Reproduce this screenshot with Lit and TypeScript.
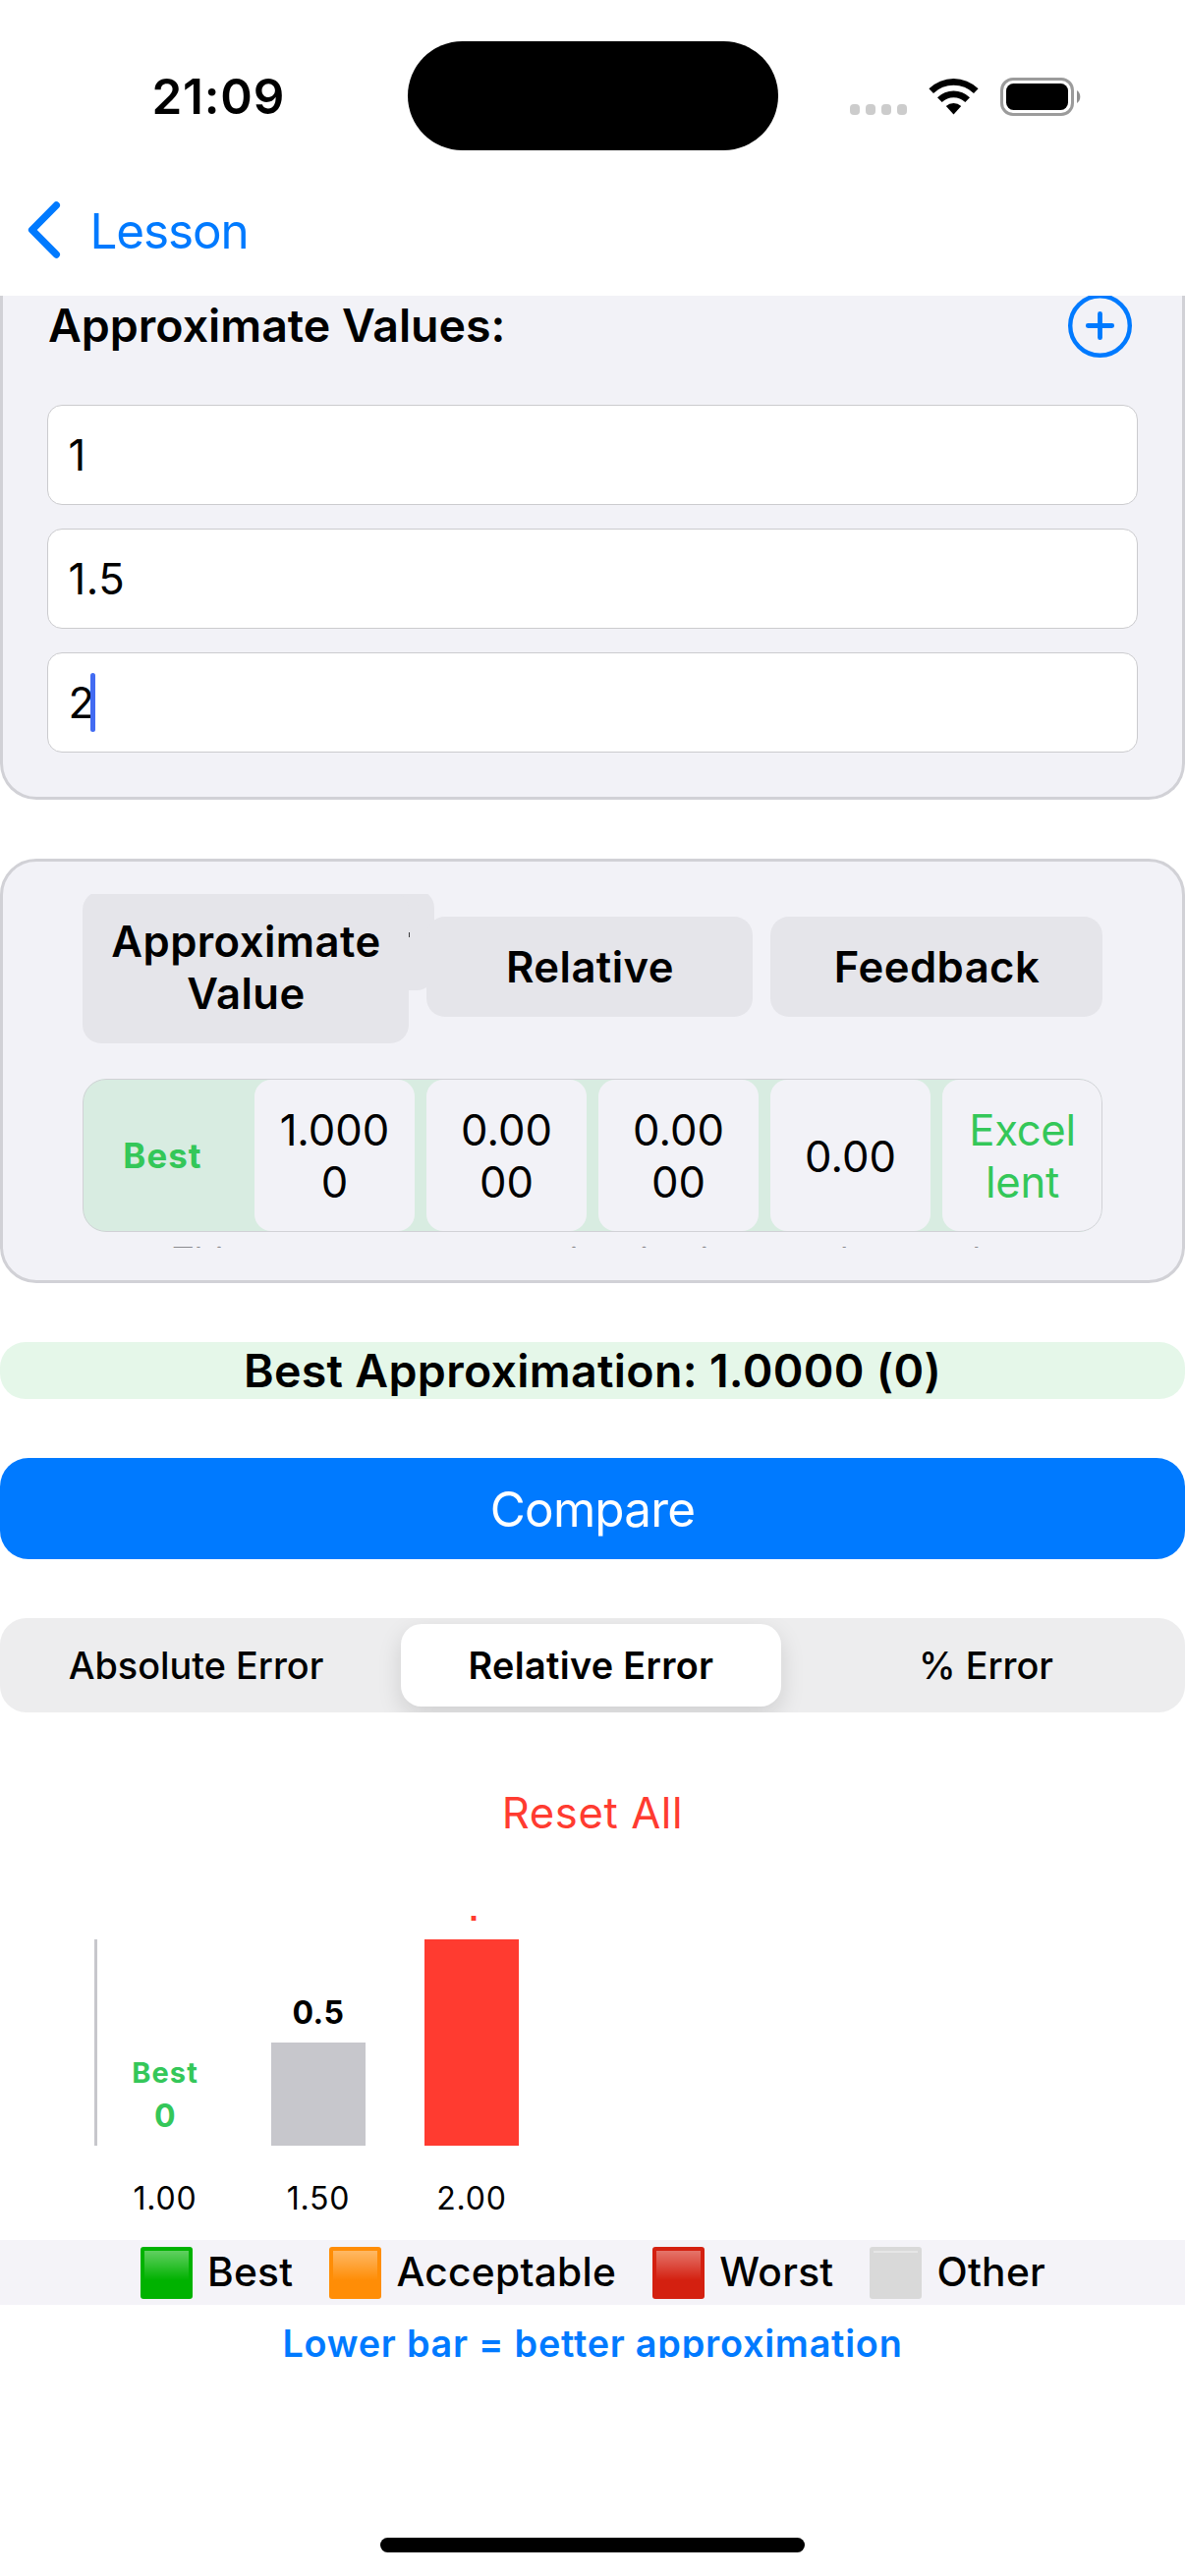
import { LitElement, html, css, nothing } from "lit";
import { customElement, property } from "lit/decorators.js";
import { classMap } from "lit/directives/class-map.js";
import { styleMap } from "lit/directives/style-map.js";

interface Bar {
  label: string;
  value: string;
  height: number;
  kind: "best" | "other" | "worst";
}

@customElement("status-bar")
class StatusBar extends LitElement {
  static styles = css`
    :host {
      display: flex;
      height: 196px;
      align-items: center;
      position: relative;
    }
    .time {
      margin-left: 154.5px;
      width: 139.5px;
      font-size: 49.4px;
      font-weight: 600;
      letter-spacing: 0.8px;
      line-height: 60px;
    }
    .island {
      margin-left: 121px;
      margin-top: -2px;
      width: 376.5px;
      height: 111px;
      border-radius: 56px;
      background: #000;
    }
    .cells {
      display: flex;
      gap: 6px;
      margin: 26px 0 0 73.5px;
    }
    .cells i {
      width: 10px;
      height: 11px;
      border-radius: 4px;
      background: #ccc;
    }
    .wifi {
      margin-left: 22px;
      width: 51px;
      height: 38px;
    }
    .battery {
      margin-left: 22px;
      width: 83px;
      height: 39px;
    }
  `;
  render() {
    return html`
      <span class="time">21:09</span>
      <div class="island"></div>
      <div class="cells"><i></i><i></i><i></i><i></i></div>
      <svg class="wifi" viewBox="0 0 51 38">
        <path d="M0.4 11.2 A36 36 0 0 1 50.6 11.2 L46 16 A29.3 29.3 0 0 0 5 16 Z" />
        <path d="M9 20.2 A23.6 23.6 0 0 1 42 20.2 L37.3 25 A17 17 0 0 0 13.7 25 Z" />
        <path d="M17.8 29 A11.5 11.5 0 0 1 33.2 29 L25.5 37.4 Z" />
      </svg>
      <svg class="battery" viewBox="0 0 83 39">
        <rect x="1.5" y="1.5" width="72" height="36" rx="11.5" fill="none" stroke="#9b9b9b" stroke-width="3" />
        <rect x="6" y="6" width="63" height="27" rx="7.5" />
        <path d="M78 13 A8 8 0 0 1 78 26 Z" fill="#8f8f8f" />
      </svg>
    `;
  }
}

@customElement("nav-bar")
class NavBar extends LitElement {
  static styles = css`
    :host {
      display: flex;
      height: 105px;
      box-sizing: border-box;
      padding: 8px 0 0 27.5px;
      align-items: flex-start;
      color: #007aff;
    }
    .chevron {
      width: 34px;
      height: 58px;
      margin-top: 1px;
    }
    .title {
      margin-left: 30px;
      font-size: 49.4px;
      line-height: 62px;
      letter-spacing: -1.1px;
    }
  `;
  render() {
    return html`
      <svg class="chevron" viewBox="0 0 34 58">
        <path d="M29.3 4 L4.6 29 L29.3 54" fill="none" stroke="#007aff" stroke-width="7.4" stroke-linecap="round" stroke-linejoin="round" />
      </svg>
      <span class="title">Lesson</span>
    `;
  }
}

@customElement("values-card")
class ValuesCard extends LitElement {
  static styles = css`
    :host {
      display: block;
      box-sizing: border-box;
      border: 3px solid #d1d1d6;
      border-top: 0;
      border-radius: 0 0 37px 37px;
      background: #f2f2f7;
      padding: 0 45px 45px;
    }
    .head {
      display: flex;
      height: 59px;
      align-items: center;
      justify-content: space-between;
      margin-bottom: 52px;
    }
    .title {
      font-size: 46.5px;
      font-weight: 600;
      line-height: 58px;
      padding-left: 1px;
    }
    .add {
      width: 65px;
      height: 65px;
      margin: 0 6px -2px 0;
      flex: none;
    }
    .fields {
      display: grid;
      gap: 24px;
    }
    .field {
      box-sizing: border-box;
      height: 102px;
      border: 1px solid #cbcbce;
      border-radius: 15px;
      background: #fff;
      padding-left: 20.5px;
      font-size: 43.6px;
      line-height: 101px;
      letter-spacing: 0.6px;
      position: relative;
    }
    .caret {
      position: absolute;
      left: 43px;
      top: 20px;
      width: 5.4px;
      height: 60px;
      border-radius: 2.5px;
      background: #426bf2;
    }
  `;
  values = ["1", "1.5", "2"];
  render() {
    return html`
      <div class="head">
        <span class="title">Approximate Values:</span>
        <svg class="add" viewBox="0 0 65 65" fill="none" stroke="#007aff" stroke-linecap="round">
          <circle cx="32.5" cy="32.5" r="30.3" stroke-width="4.4" />
          <path d="M32.5 20.3 V44.7 M20.3 32.5 H44.7" stroke-width="4.8" />
        </svg>
      </div>
      <div class="fields">
        ${this.values.map(
          (v, i) => html`<div class="field">${v}${i === this.values.length - 1 ? html`<i class="caret"></i>` : nothing}</div>`
        )}
      </div>
    `;
  }
}

@customElement("results-card")
class ResultsCard extends LitElement {
  static styles = css`
    :host {
      display: block;
      box-sizing: border-box;
      height: 432px;
      border: 3px solid #d1d1d6;
      border-radius: 37px;
      background: #f2f2f7;
      padding: 33px 81px;
    }
    .table {
      height: 360px;
      overflow: hidden;
    }
    .header {
      display: grid;
      grid-template-columns: 332px 331.5px 338px;
      gap: 18.25px;
      align-items: center;
      height: 156px;
      margin-top: -4px;
      position: relative;
      font-size: 43.6px;
      font-weight: 600;
      line-height: 53px;
      letter-spacing: 0.45px;
      text-align: center;
    }
    .head-cell {
      box-sizing: border-box;
      padding: 25px 9.5px 24px 10.5px;
      border-radius: 19px;
      background: #e5e5ea;
      position: relative;
    }
    .head-cell.first {
      z-index: 1;
    }
    .under {
      position: absolute;
      left: 158px;
      top: 0;
      width: 200px;
      height: 102px;
      border-radius: 18px;
      background: #e5e5ea;
    }
    .under::after {
      content: "";
      position: absolute;
      left: 174px;
      top: 43px;
      width: 1px;
      height: 5px;
      background: #3c3c3e;
    }
    .row {
      position: relative;
      display: grid;
      grid-template-columns: repeat(6, 163px);
      gap: 12px;
      margin-top: 36px;
      height: 156px;
      border-radius: 24px;
      overflow: hidden;
      background: #d8ece1;
      font-size: 43.6px;
      line-height: 53px;
      text-align: center;
    }
    .row::after {
      content: "";
      position: absolute;
      inset: 0;
      border: 1.5px solid #d1d1d6;
      border-radius: 24px;
    }
    .cell {
      display: flex;
      align-items: center;
      justify-content: center;
      box-sizing: border-box;
      margin: 1px 0;
      padding-top: 2px;
      border-radius: 17px;
      background: #f2f2f7;
    }
    .badge {
      background: none;
      padding: 0;
      color: #34c759;
      font-size: 34.8px;
      font-weight: 700;
      letter-spacing: 1.1px;
    }
    .good {
      color: #34c759;
      letter-spacing: -0.3px;
    }
    .hint {
      margin-top: 6px;
      font-size: 34.8px;
      line-height: 44px;
      text-align: center;
      color: #8a8a8e;
      white-space: nowrap;
      letter-spacing: 0.41px;
    }
  `;
  render() {
    return html`
      <div class="table">
        <div class="header">
          <div class="under"></div>
          <div class="head-cell first">Approximate<br />Value</div>
          <div class="head-cell">Relative</div>
          <div class="head-cell">Feedback</div>
        </div>
        <div class="row">
          <div class="cell badge">Best</div>
          <div class="cell">1.000<br />0</div>
          <div class="cell">0.00<br />00</div>
          <div class="cell">0.00<br />00</div>
          <div class="cell">0.00</div>
          <div class="cell good">Excel<br />lent</div>
        </div>
        <div class="hint">This means your approximation is very close to the</div>
      </div>
    `;
  }
}

@customElement("segmented-control")
class SegmentedControl extends LitElement {
  static styles = css`
    :host {
      display: grid;
      grid-template-columns: 402px 1fr 405px;
      box-sizing: border-box;
      height: 96px;
      padding: 6px 0;
      border-radius: 27px;
      background: #ededee;
      overflow: hidden;
      font-size: 37.8px;
      font-weight: 500;
      line-height: 84px;
      text-align: center;
    }
    .segment {
      box-sizing: border-box;
      padding-right: 3px;
    }
    .segment:last-child {
      padding-right: 0;
    }
    .segment.selected {
      margin: 0 -3px 0 6px;
      width: 387px;
      padding-right: 0;
      border-radius: 21px;
      background: #fff;
      box-shadow: 0 9px 24px rgba(0, 0, 0, 0.13);
      font-weight: 600;
      letter-spacing: 0.33px;
    }
  `;
  selected = 1;
  render() {
    return ["Absolute Error", "Relative Error", "% Error"].map(
      (t, i) => html`<div class=${classMap({ segment: true, selected: i === this.selected })}>${t}</div>`
    );
  }
}

@customElement("error-chart")
class ErrorChart extends LitElement {
  static styles = css`
    :host {
      display: flex;
      height: 330px;
      padding-left: 96px;
      gap: 60px;
    }
    .axis {
      width: 2.7px;
      height: 210px;
      margin: 24px -38.7px 0 0;
      background: #c7c7cc;
      flex: none;
    }
    .column {
      width: 96px;
      text-align: center;
    }
    .plot {
      display: flex;
      flex-direction: column;
      justify-content: flex-end;
      height: 234px;
      overflow: hidden;
    }
    .tag,
    .value {
      flex: none;
      font-weight: 700;
    }
    .tag {
      font-size: 29px;
      line-height: 36px;
      letter-spacing: 1.1px;
      margin-bottom: 6px;
    }
    .value {
      font-size: 32px;
      line-height: 39px;
      letter-spacing: 0.5px;
      margin-bottom: 11px;
    }
    .bar {
      flex: none;
      background: #c7c7cc;
    }
    .worst .bar {
      background: #ff3b30;
    }
    .worst .value {
      color: #ff3b30;
    }
    .best .tag,
    .best .value {
      color: #34c759;
    }
    .tick {
      margin-top: 33.5px;
      font-size: 32px;
      line-height: 39px;
      letter-spacing: 0.8px;
    }
  `;
  @property({ attribute: false }) bars: Bar[] = [];
  render() {
    return html`
      <div class="axis"></div>
      ${this.bars.map(
        (b) => html`<div class="column ${b.kind}">
          <div class="plot">
            ${b.kind === "best" ? html`<span class="tag">Best</span>` : nothing}
            <span class="value">${b.value}</span>
            <div class="bar" style=${styleMap({ height: `${b.height}px` })}></div>
          </div>
          <div class="tick">${b.label}</div>
        </div>`
      )}
    `;
  }
}

@customElement("chart-legend")
class ChartLegend extends LitElement {
  static styles = css`
    :host {
      display: flex;
      justify-content: center;
      gap: 37px;
      height: 66px;
      padding-left: 1px;
      align-items: center;
      background: #f4f3f8;
      font-size: 40.7px;
      font-weight: 500;
      line-height: 52px;
      letter-spacing: 0.28px;
    }
    .item {
      display: flex;
      align-items: center;
      gap: 15px;
    }
    .swatch {
      width: 53px;
      height: 53px;
      box-sizing: border-box;
      border-radius: 3px;
      padding: 4px;
      margin-top: 1px;
    }
    .swatch::before {
      content: "";
      display: block;
      height: 30px;
      background: linear-gradient(rgba(255, 255, 255, 0.38), rgba(255, 255, 255, 0));
    }
    .green {
      background: #00b200;
    }
    .orange {
      background: #ff8d06;
    }
    .red {
      background: #d42010;
    }
    .gray {
      background: #d9d9d9;
    }
    .gray::before {
      height: 2px;
      background: #e6e6e6;
    }
  `;
  items = [
    ["green", "Best"],
    ["orange", "Acceptable"],
    ["red", "Worst"],
    ["gray", "Other"],
  ];
  render() {
    return this.items.map(
      ([tone, label]) => html`<div class="item"><i class="swatch ${tone}"></i><span>${label}</span></div>`
    );
  }
}

@customElement("app-root")
class AppRoot extends LitElement {
  static styles = css`
    :host {
      display: flex;
      flex-direction: column;
      width: 1206px;
      height: 2622px;
      background: #fff;
      color: #000;
      font-family: Inter, "Liberation Sans", sans-serif;
      overflow: hidden;
    }
    .content {
      height: 2099px;
      flex: none;
      overflow: hidden;
    }
    .stack {
      display: flex;
      flex-direction: column;
      gap: 60px;
    }
    .best {
      height: 58px;
      border-radius: 26px;
      background: #e5f7e9;
      text-align: center;
      font-size: 46.5px;
      font-weight: 600;
      line-height: 58px;
      letter-spacing: 0.32px;
    }
    .compare {
      height: 103px;
      border-radius: 29px;
      background: #007aff;
      color: #fff;
      text-align: center;
      font-size: 49.4px;
      line-height: 105px;
      letter-spacing: -0.8px;
    }
    .reset {
      margin: 76px 0 77px;
      text-align: center;
      color: #ff3b30;
      font-size: 43.6px;
      line-height: 54px;
      letter-spacing: 0.6px;
    }
    .note {
      padding-top: 12px;
      text-align: center;
      color: #007aff;
      font-size: 37.8px;
      font-weight: 600;
      line-height: 54px;
      letter-spacing: 0.76px;
    }
    .footer {
      flex: 1;
      display: flex;
      justify-content: center;
      align-items: flex-end;
      padding-bottom: 24px;
    }
    .home {
      width: 432px;
      height: 15px;
      border-radius: 8px;
      background: #000;
    }
  `;
  bars: Bar[] = [
    { label: "1.00", value: "0", height: 0, kind: "best" },
    { label: "1.50", value: "0.5", height: 105, kind: "other" },
    { label: "2.00", value: "1", height: 210, kind: "worst" },
  ];
  render() {
    return html`
      <status-bar></status-bar>
      <nav-bar></nav-bar>
      <div class="content">
        <div class="stack">
          <values-card></values-card>
          <results-card></results-card>
          <div class="best">Best Approximation: 1.0000 (0)</div>
          <div class="compare">Compare</div>
          <segmented-control></segmented-control>
        </div>
        <div class="reset">Reset All</div>
        <error-chart .bars=${this.bars}></error-chart>
        <chart-legend></chart-legend>
        <div class="note">Lower bar = better approximation</div>
      </div>
      <div class="footer"><div class="home"></div></div>
    `;
  }
}
